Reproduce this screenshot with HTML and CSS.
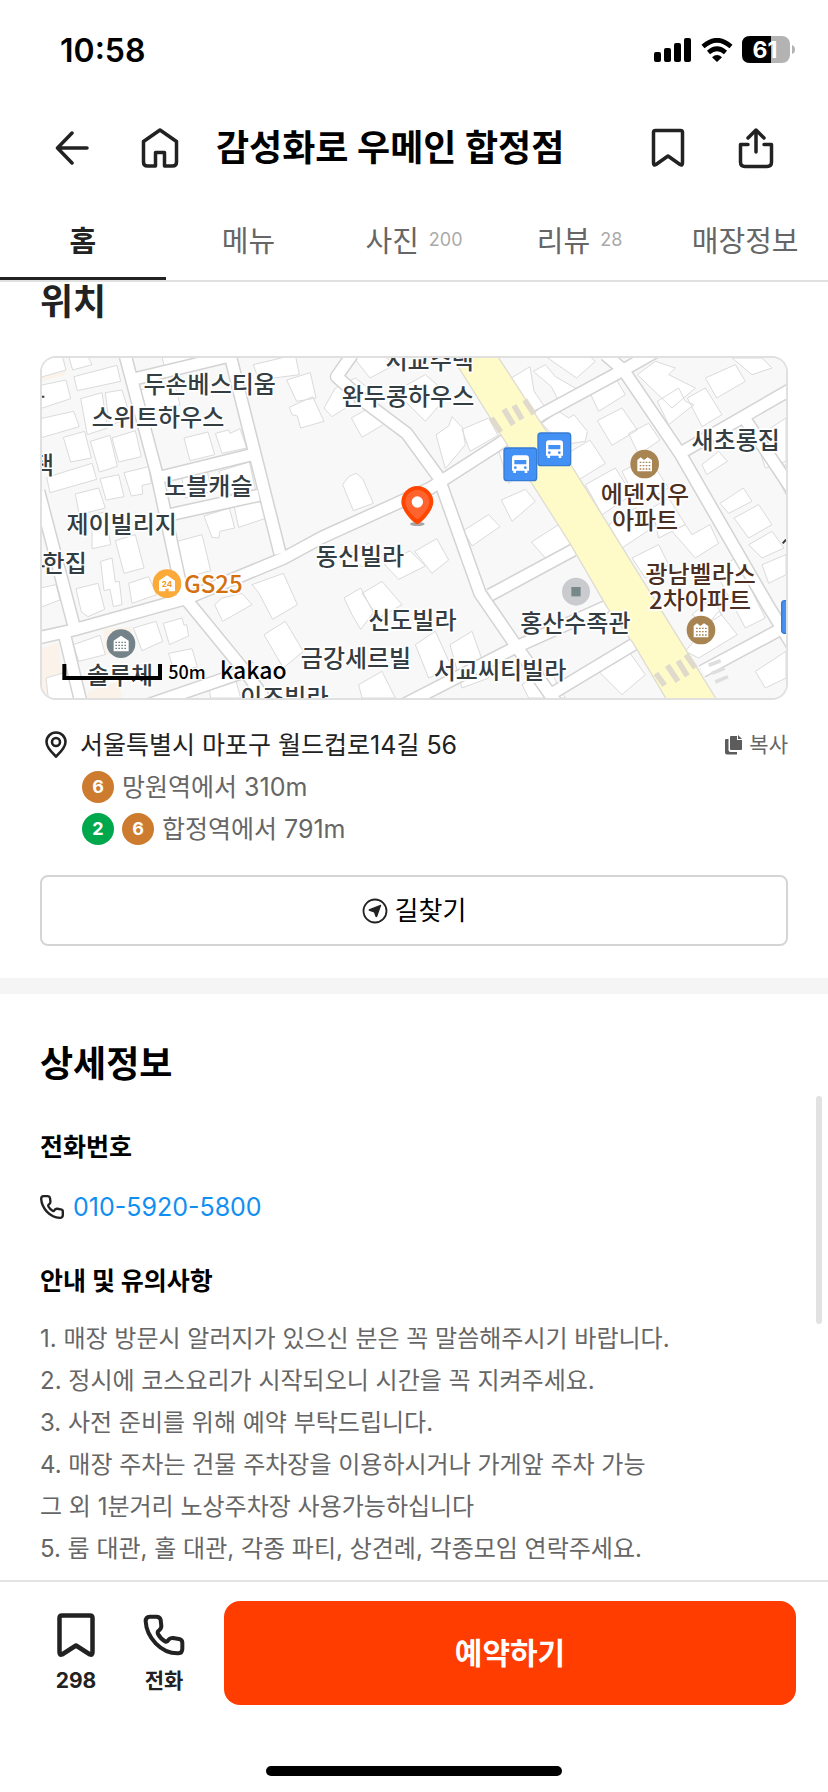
FILE: index.html
```html
<!DOCTYPE html>
<html lang="ko">
<head>
<meta charset="utf-8">
<meta name="viewport" content="width=device-width, initial-scale=1">
<title>감성화로 우메인 합정점</title>
<link rel="stylesheet" href="styles.css">
</head>
<body>
<div class="app">
  <div class="status">
    <span class="status-time">10:58</span>
    <div class="status-icons">
      <svg width="38" height="24" viewBox="0 0 38 24" aria-hidden="true"><rect y="14" width="7" height="10" rx="2"/><rect x="10" y="10" width="7" height="14" rx="2"/><rect x="20" y="5" width="7" height="19" rx="2"/><rect x="30" width="7" height="24" rx="2"/></svg>
      <svg width="32" height="24" viewBox="0 0 32 24" aria-hidden="true"><path d="M2 8.500Q16-4 30 8.500M7.500 14.500Q16 7 24.500 14.500" fill="none" stroke="#000" stroke-width="4.600"/><path d="M11 19.200Q16 15 21 19.200L16 24Z"/></svg>
      <svg class="battery" width="54" height="28" viewBox="0 0 54 28" role="img" aria-label="배터리 61%"><rect y="0" width="48" height="27" rx="8" fill="#b3b3b3"/><path d="M8 0H29V27H8Q0 27 0 19V8Q0 0 8 0Z"/><path d="M50 9Q53 10 53 13.500T50 18Z" fill="#b3b3b3"/><text x="23" y="22" text-anchor="middle" class="battery-text">61</text></svg>
    </div>
  </div>

  <header class="topbar">
    <button class="icon-btn" aria-label="뒤로"><svg width="34" height="34" viewBox="0 0 34 34" class="line"><path d="M32 17H3M17 2 2.500 17 17 32"/></svg></button>
    <button class="icon-btn icon-btn-home" aria-label="홈으로"><svg width="38" height="44" viewBox="0 0 38 44" class="line"><path d="M19 4 35.500 15.500V36Q35.500 40 31.500 40H23.500V26.500H14.500V40H6.500Q2.500 40 2.500 36V15.500Z"/></svg></button>
    <h1 class="title">감성화로 우메인 합정점</h1>
    <button class="icon-btn" aria-label="저장"><svg width="34" height="40" viewBox="0 0 34 40" class="line"><path d="M4.500 2.500H29.500Q31.500 2.500 31.500 4.500V35Q31.500 38 29 36.500L17 28 5 36.500Q2.500 38 2.500 35V4.500Q2.500 2.500 4.500 2.500Z"/></svg></button>
    <button class="icon-btn" aria-label="공유"><svg width="36" height="42" viewBox="0 0 36 42" class="line"><path d="M10 17.500H2.500V35Q2.500 39.500 7 39.500H29Q33.500 39.500 33.500 35V17.500H26M18 25V3M10 11 18 3 26 11"/></svg></button>
  </header>

  <nav class="tabs">
    <a class="tab tab-on" href="#home">홈</a>
    <a class="tab" href="#menu">메뉴</a>
    <a class="tab" href="#photo">사진 <span class="count">200</span></a>
    <a class="tab" href="#review">리뷰 <span class="count">28</span></a>
    <a class="tab" href="#info">매장정보</a>
  </nav>

  <main class="content">
    <section class="location">
      <h2 class="heading heading-soft">위치</h2>
      <div class="map">
        <svg class="map-svg" viewBox="0 0 2232 1020" preserveAspectRatio="xMidYMid slice" role="img" aria-label="매장 위치 지도">
          <defs>
            <g id="roads">
              <path d="M249-10 344 346 424 720M564-10 714 586M284 61 564-6M344 360 630 290M374 472 650 412M-40 846 94 816 434 721 724 601 844 536 1164 391 1374 256 1504 166 1744 36 1860-30M-10 400 99 816M69 836 116 1030M434 726 614 946 680 1040M930-10 884 56 974 136 1094 226 1189 356 1314 706 1424 866 1540 1030M1344 711 1594 576M1054 1056 1424 866 1714 736M1424 866 1524 1010 1790 850M1690-10 1744 36 1914 286 2174 736 2250 860M1914 286 2260 86M1980 940 2260 790M2104 176 2260 410M320 1040 640 930"/>
            </g>
            <g id="apartment">
              <circle r="43" fill="#a88453"/>
              <path d="M-22 22V-12L-12-20-2-12 9-20 22-12V22Z" fill="#fff"/>
              <path d="M-15-5H17M-15 5H17M-15 15H17" stroke="#a88453" stroke-width="4" stroke-dasharray="5 4"/>
            </g>
            <g id="bus">
              <rect x="2" y="2" width="98" height="98" rx="9" fill="#4491f5" stroke="#367bd3" stroke-width="4"/>
              <path d="M34 24H68Q77 24 77 34V70H72V77H64V70H38V77H30V70H26V34Q26 24 34 24Z" fill="#fff"/>
              <path d="M33 38H69V51H33Z" fill="#4491f5"/><circle cx="36" cy="61" r="4" fill="#4491f5"/><circle cx="66" cy="61" r="4" fill="#4491f5"/>
            </g>
          </defs>
          <rect width="2232" height="1020" fill="#f8f8f8"/>
          <path d="M0 0H70V50L0 70ZM0 870 50 855 60 960 0 1020ZM185 812 270 806 275 880 190 890ZM140 1000 230 970 240 1020H130Z" fill="#fbf3ea"/>
          <g class="buildings">
            <path d="M-5 5 60-10 72 36-5 58ZM80-5 135-10 150 20 92 36ZM96 56 225 22 236 70 106 98ZM-5 82 72 66 86 122-5 152ZM116 122 180 104 196 210 136 230ZM190 104 240 96 266 180 202 202ZM-5 182 95 160 112 206-5 240ZM64 238 128 220 148 300 86 312ZM145 250 204 232 226 325 172 342ZM210 240 280 218 298 296 230 312ZM14 358 150 316 164 364 24 404ZM100 408 170 390 190 450 112 470ZM174 362 230 350 246 416 192 426ZM246 344 320 326 328 376 300 382 302 408 268 414ZM150 470 190 462 206 560 150 572ZM220 548 280 530 306 630 246 646ZM176 610 210 600 220 672 232 670 240 740 214 746 204 694 186 698ZM102 692 168 676 188 754 138 776 118 762ZM260 676 320 656 344 710 270 736ZM-5 690 42 680 54 726-5 748ZM94 860 174 832 190 890 110 910ZM274 810 342 790 362 850 300 878ZM364 796 420 780 426 802 434 800 440 834 382 860ZM380 886 450 872 466 926 398 946ZM12 960 80 940 104 1030H20Z"/>
            <path d="M296 96 396 72 414 140 310 164ZM360-5 470-10 476 8 368 32ZM634 20 760-10 772 50 650 66ZM734 66 805 44 822 120 764 130ZM742 148 812 116 846 190 776 210 766 174 750 170ZM928 180 992 144 1030 196 960 238ZM426 240 498 222 518 290 444 308ZM520 226 560 216 564 226 594 212 614 270 540 286ZM418 350 494 330 508 400 430 420ZM530 340 622 312 640 394 564 410ZM486 474 562 450 578 510 534 520 530 540 510 538ZM576 444 662 422 674 480 590 508ZM406 550 480 530 506 638 426 660ZM902 380 920 356 942 346 962 362 994 436 934 458ZM630 680 724 646 766 740 692 784 650 704ZM518 740 540 720 600 706 630 740 542 790ZM666 830 730 790 784 880 724 930ZM906 720 956 690 994 764 956 814 930 770ZM960 706 1020 670 1080 740 1010 780ZM1028 620 1104 578 1150 624 1070 664ZM1118 580 1184 542 1220 606 1170 646ZM920 590 980 556 1010 600 960 626ZM500 980 580 960 596 1020H506ZM950 980 1020 940 1060 1020H960ZM1120 860 1180 820 1230 930 1160 960ZM936 0 1020-10 1060 20 984 60ZM846 150 880 90 940 60 990 100 870 176ZM1060 100 1150 50 1220 110 1150 190Z"/>
            <path d="M1182 230 1220 204 1230 176 1262 210 1270 260 1210 332ZM1260 214 1340 180 1368 232 1284 280ZM1408 60 1464 26 1476 100 1508 146 1460 166ZM1474 40 1510 20 1540 56 1610 96 1556 140 1528 86ZM1506-8H1640L1660 10 1604 60ZM1500 196 1550 160 1580 180 1596 170 1636 220 1630 250 1560 260ZM1640 96 1720 60 1750 110 1670 160ZM1666 188 1740 150 1786 216 1710 262ZM1760 226 1820 196 1854 246 1790 290ZM1554 300 1644 246 1690 316 1600 372ZM1630 380 1720 330 1770 410 1680 470ZM1740 340 1820 300 1880 390 1790 440ZM1700 500 1780 450 1830 510 1740 570ZM1830 450 1880 420 1930 500 1850 540ZM1786 50 1840 10 1900 30 1880 50 1960 90 1890 150ZM1846 130 1910 90 1930 130 1956 140 1880 200ZM1936 120 1990 90 2040 170 1980 206ZM1990 60 2080 20 2110 70 2024 120ZM2070 0 2160 0 2190 30 2130 50ZM1980 320 2030 280 2056 310 1994 350ZM2034 436 2104 390 2130 430 2060 466ZM2076 480 2150 440 2190 500 2120 540ZM2120 560 2190 520 2226 570 2160 600ZM2160 620 2232 590V650L2180 676Z"/>
            <path d="M1378 426 1450 394 1480 430 1410 490ZM1264 518 1340 470 1374 506 1290 564ZM1468 552 1550 500 1590 560 1510 600ZM1360 246 1410 220 1430 260 1460 250 1490 310 1400 376ZM1770 600 1850 560 1880 620 1810 660ZM1890 520 1930 500 1950 530 2004 500 2030 556 1960 600ZM2030 760 2086 830 2020 870 1970 900 1930 880ZM1950 770 2010 720 2040 770 1990 800ZM2020 640 2080 600 2170 780 2110 810ZM1440 980 1520 930 1570 1020H1460ZM1660 930 1760 880 1810 950 1740 1010ZM1224 860 1290 820 1340 960 1260 990ZM2140 940 2232 880V960L2170 990ZM2140 240 2232 180V310L2170 330ZM2196 340 2232 320V410Z"/>
          </g>
          <use href="#roads" class="road-edge"/>
          <use href="#roads" class="road"/>
          <path d="M1229-5 1374 226 1584 556 1694 746 1774 856 1874 1025H2024L1944 896 1814 686 1584 316 1504 206 1367-5Z" fill="#fffbc9" stroke="#deddd1" stroke-width="4"/>
          <path d="M1348 180 1376 222M1386 154 1414 200M1416 142 1440 184M1448 126 1476 168M1842 946 1868 982M1876 922 1908 970M1908 908 1936 954M1932 890 1960 930" stroke="#dfdacb" stroke-width="17"/>
          <path d="M2000 922 2036 908M2010 946 2048 930M2020 972 2058 956" stroke="#dededc" stroke-width="11"/>

          <g class="labels">
            <text x="503" y="105">두손베스티움</text>
            <text x="348" y="205">스위트하우스</text>
            <text x="1163" y="32">서교주택</text>
            <text x="1098" y="140">완두콩하우스</text>
            <text x="-30" y="348">주택</text>
            <text x="499" y="410">노블캐슬</text>
            <text x="239" y="525">제이빌리지</text>
            <text x="68" y="643">한집</text>
            <text x="954" y="622">동신빌라</text>
            <text x="1111" y="812">신도빌라</text>
            <text x="942" y="926">금강세르빌</text>
            <text x="234" y="977">솔루체</text>
            <text x="727" y="1043">이조빌라</text>
            <text x="1374" y="962">서교씨티빌라</text>
            <text x="1600" y="822">홍산수족관</text>
            <text x="2081" y="273">새초롱집</text>
            <text x="514" y="705" class="label-store">GS25</text>
            <text x="1809" y="435" class="label-apt">에덴지우</text>
            <text x="1809" y="514" class="label-apt">아파트</text>
            <text x="1976" y="675" class="label-apt">광남벨라스</text>
            <text x="1974" y="753" class="label-apt">2차아파트</text>
          </g>
          <path d="M0 116H7M0 625H8M2222 556 2232 545" stroke="#333d42" stroke-width="6"/>

          <use href="#apartment" x="1808" y="318"/>
          <use href="#apartment" x="1977" y="816"/>
          <use href="#bus" x="1384" y="268"/>
          <use href="#bus" x="1486" y="223"/>
          <use href="#bus" x="2217" y="726"/>
          <circle cx="1602" cy="701" r="42" fill="#c9cbce"/><path d="M1588 687H1616V715H1588Z" fill="#77888a"/>
          <circle cx="237" cy="857" r="43" fill="#74838a"/>
          <path d="M215 880V848L237 833 260 848V880Z" fill="#fff"/>
          <path d="M220 853H256M220 862H256M220 871H256" stroke="#74838a" stroke-width="4" stroke-dasharray="5 4"/>
          <circle cx="375" cy="677" r="43" fill="#fba938"/>
          <path d="M351 700V668L375 652 399 668V700H380V692H370V700Z" fill="#fff"/>
          <text x="375" y="687" class="store-hours">24</text>

          <ellipse cx="1126" cy="498" rx="22" ry="6" fill="#a5a5a5"/>
          <path d="M1126 498C1116 498 1078 458 1078 432A48 48 0 0 1 1174 432C1174 458 1136 498 1126 498Z" fill="#ff4500"/>
          <path d="M1126 484C1118 480 1090 452 1090 432A36 36 0 0 1 1162 432C1162 452 1134 480 1126 484Z" fill="#ff642f"/>
          <circle cx="1126" cy="432" r="17" fill="#fff"/>

          <path d="M67 918V960H354V918" fill="none" stroke="#000" stroke-width="12"/>
          <text x="379" y="962" class="scale-text">50m</text>
          <text x="534" y="964" class="brand-text">kakao</text>
        </svg>
      </div>

      <div class="address">
        <svg class="address-pin" width="22" height="28" viewBox="0 0 22 28"><path d="M11 25.500C9 23.500 1.500 17 1.500 11A9.500 9.500 0 0 1 20.500 11C20.500 17 13 23.500 11 25.500Z"/><circle cx="11" cy="11" r="4"/></svg>
        <span class="address-text">서울특별시 마포구 월드컵로14길 56</span>
        <button class="copy"><svg width="17" height="20" viewBox="0 0 17 20"><path d="M6 1H12V5H17V14Q17 15 16 15H6Q5 15 5 14V2Q5 1 6 1ZM13 0 17 4H13ZM1 4H3.500V15Q3.500 17 5.500 17H12V19Q12 19.500 11 19.500H2Q0 19.500 0 17.500V5Q0 4 1 4Z" fill="#5c5c5c"/></svg>복사</button>
      </div>
      <ul class="stations">
        <li class="station"><span class="line-no line-6">6</span><span>망원역에서 310m</span></li>
        <li class="station"><span class="line-no line-2">2</span><span class="line-no line-6">6</span><span>합정역에서 791m</span></li>
      </ul>
      <button class="directions"><svg width="26" height="26" viewBox="0 0 26 26"><circle cx="13" cy="13" r="11.500" fill="none" stroke="#222" stroke-width="1.800"/><path d="M18.500 6.800Q19.300 6.500 19.200 7.500L15.300 18.500Q14.500 20 13.500 18.800L12 14.500 7 12.800Q6 12 7 11.300Z" fill="#222"/></svg>길찾기</button>
    </section>

    <section class="details">
      <h2 class="heading">상세정보</h2>
      <h3 class="subheading subheading-phone">전화번호</h3>
      <p class="phone"><svg width="24" height="24" viewBox="0 0 122 122" class="handset"><path d="M18 6H38Q49 6 51 16L53 34Q53 42 46 47 40 51 43 58 50 72 66 81 70 83 75 75 79 69 88 70L106 73Q116 75 116 84V102Q116 115 104 116 66 117 36 86 8 56 6 20 6 6 18 6Z"/></svg><a class="phone-link" href="tel:010-5920-5800">010-5920-5800</a></p>
      <h3 class="subheading subheading-notice">안내 및 유의사항</h3>
      <p class="notice">1. 매장 방문시 알러지가 있으신 분은 꼭 말씀해주시기 바랍니다.<br>2. 정시에 코스요리가 시작되오니 시간을 꼭 지켜주세요.<br>3. 사전 준비를 위해 예약 부탁드립니다.<br>4. 매장 주차는 건물 주차장을 이용하시거나 가게앞 주차 가능<br>그 외 1분거리 노상주차장 사용가능하십니다<br>5. 룸 대관, 홀 대관, 각종 파티, 상견례, 각종모임 연락주세요.</p>
    </section>
    <div class="scroll-thumb"></div>
  </main>

  <footer class="footer">
    <div class="actions">
      <button class="action"><svg width="38" height="44" viewBox="0 0 38 44" class="line line-bold"><path d="M5 2.500H33Q35.500 2.500 35.500 5V39Q35.500 42.500 33 41.500L19 32.500 5 41.500Q2.500 42.500 2.500 39V5Q2.500 2.500 5 2.500Z"/></svg>298</button>
      <button class="action"><svg width="44" height="44" viewBox="-5 -5 132 132" class="handset"><path d="M18 6H38Q49 6 51 16L53 34Q53 42 46 47 40 51 43 58 50 72 66 81 70 83 75 75 79 69 88 70L106 73Q116 75 116 84V102Q116 115 104 116 66 117 36 86 8 56 6 20 6 6 18 6Z"/></svg>전화</button>
      <button class="reserve">예약하기</button>
    </div>
    <div class="home-bar"></div>
  </footer>
</div>
</body>
</html>
```
FILE: styles.css
```css
* { box-sizing: border-box; }

body {
  margin: 0;
  background: #fff;
  color: #000;
  font-family: Inter, "Noto Sans CJK KR", sans-serif;
  font-size: 25px;
}

h1, h2, h3, p, ul { margin: 0; padding: 0; }
svg { display: block; flex: none; }
a { color: inherit; text-decoration: none; }

button {
  margin: 0;
  padding: 0;
  border: 0;
  background: none;
  color: #222;
  font: inherit;
  cursor: pointer;
}

.app {
  display: flex;
  flex-direction: column;
  min-height: 100vh;
}

.line {
  fill: none;
  stroke: #222;
  stroke-width: 3.5;
  stroke-linecap: round;
  stroke-linejoin: round;
}
.line-bold { stroke-width: 4.5; }

.handset {
  fill: none;
  stroke: #222;
  stroke-width: 12;
  stroke-linejoin: round;
}

/* Status bar */
.status {
  display: flex;
  align-items: center;
  justify-content: space-between;
  height: 100px;
  padding: 0 32px 0 60px;
}
.status-time {
  font-size: 32px;
  font-weight: 600;
}
.status-icons {
  display: flex;
  align-items: center;
  gap: 9px;
}
.battery-text {
  fill: #fff;
  font-size: 23px;
  font-weight: 700;
}

/* Title bar */
.topbar {
  display: flex;
  align-items: center;
  gap: 40px;
  height: 96px;
  padding: 0 48px;
}
.icon-btn {
  display: grid;
  place-items: center;
  flex: none;
  width: 48px;
  height: 48px;
}
.icon-btn-home { margin-right: -8px; }
.title {
  flex: 1;
  font-size: 36px;
  font-weight: 700;
  line-height: 48px;
  white-space: nowrap;
}

/* Tabs */
.tabs {
  display: grid;
  grid-template-columns: repeat(5, 1fr);
  height: 86px;
  border-bottom: 2px solid #e0e0e0;
}
.tab {
  display: flex;
  align-items: center;
  justify-content: center;
  gap: 10px;
  padding-top: 5px;
  border-bottom: 3px solid transparent;
  color: #666;
  font-size: 29px;
  white-space: nowrap;
}
.tab-on {
  border-color: #222;
  color: #222;
  font-weight: 700;
}
.count {
  color: #aaa;
  font-size: 18px;
}

/* Content */
.content {
  position: relative;
  flex: 1;
}
.location {
  padding: 0 40px 32px;
  border-bottom: 16px solid #f5f5f5;
}
.heading {
  font-size: 36px;
  font-weight: 700;
  line-height: 40px;
}
.heading-soft { color: #222; }

.map {
  margin-top: 34px;
  overflow: hidden;
  border: 2px solid #e0e0e0;
  border-radius: 16px;
}
.map-svg {
  width: 100%;
  height: auto;
}
.buildings {
  fill: #fff;
  stroke: #dadada;
  stroke-width: 3;
}
.road-edge, .road {
  fill: none;
  stroke-linejoin: round;
}
.road-edge { stroke: #d3d3d3; stroke-width: 42; }
.road { stroke: #fff; stroke-width: 33; }
.labels {
  fill: #333d42;
  stroke: #fff;
  stroke-width: 10;
  stroke-linejoin: round;
  paint-order: stroke;
  font-family: "Noto Sans CJK KR", sans-serif;
  font-size: 72px;
  font-weight: 500;
  text-anchor: middle;
}
.label-store { fill: #d4700f; }
.label-apt { fill: #4c2f20; }
.store-hours {
  fill: #f29a22;
  font-size: 24px;
  font-weight: 700;
  text-anchor: middle;
}
.scale-text, .brand-text {
  stroke: #fff;
  stroke-width: 6;
  paint-order: stroke;
  font-family: "Noto Sans CJK KR", sans-serif;
  font-weight: 500;
}
.scale-text { font-size: 54px; }
.brand-text { font-size: 69px; }

.address {
  display: flex;
  align-items: center;
  margin-top: 24px;
  padding-left: 5px;
  line-height: 42px;
}
.address-pin {
  margin-right: 13px;
  fill: none;
  stroke: #222;
  stroke-width: 2.6;
}
.address-text {
  flex: 1;
  color: #222;
}
.copy {
  display: flex;
  align-items: center;
  gap: 7px;
  color: #666;
  font-size: 21px;
}
.stations {
  padding-left: 42px;
  color: #666;
  line-height: 42px;
  list-style: none;
}
.station {
  display: flex;
  align-items: center;
  gap: 8px;
}
.line-no {
  width: 32px;
  border-radius: 50%;
  color: #fff;
  font-size: 18px;
  font-weight: 700;
  line-height: 32px;
  text-align: center;
}
.line-2 { background: #00a84d; }
.line-6 { background: #cd7c2f; }

.directions {
  display: flex;
  align-items: center;
  justify-content: center;
  gap: 7px;
  width: 100%;
  height: 71px;
  margin-top: 25px;
  border: 2px solid #d5d5d5;
  border-radius: 8px;
  color: #000;
  font-size: 26px;
  line-height: 32px;
}

.details { padding: 50px 40px 8px; }
.subheading {
  font-size: 25px;
  font-weight: 700;
  line-height: 36px;
}
.subheading-phone { margin-top: 45px; }
.phone {
  display: flex;
  align-items: center;
  gap: 9px;
  margin-top: 24px;
  line-height: 36px;
}
.phone-link { color: #118ff0; }
.subheading-notice { margin-top: 38px; }
.notice {
  margin-top: 19px;
  color: #666;
  font-size: 24px;
  line-height: 42px;
}
.scroll-thumb {
  position: absolute;
  top: 814px;
  right: 6px;
  width: 6px;
  height: 228px;
  border-radius: 3px;
  background: #e2e2e2;
}

/* Bottom bar */
.footer {
  padding-top: 19px;
  border-top: 2px solid #e3e3e3;
}
.actions {
  display: flex;
  gap: 32px;
  padding: 0 32px 0 48px;
}
.action {
  display: flex;
  flex-direction: column;
  align-items: center;
  justify-content: center;
  gap: 8px;
  width: 56px;
  padding-top: 4px;
  font-size: 21px;
  font-weight: 700;
  line-height: 32px;
}
.reserve {
  flex: 1;
  height: 104px;
  border-radius: 16px;
  background: #ff3d00;
  color: #fff;
  font-size: 30px;
  font-weight: 700;
  line-height: 40px;
}
.home-bar {
  width: 296px;
  height: 10px;
  margin: 61px auto 16px;
  border-radius: 5px;
  background: #000;
}
```
